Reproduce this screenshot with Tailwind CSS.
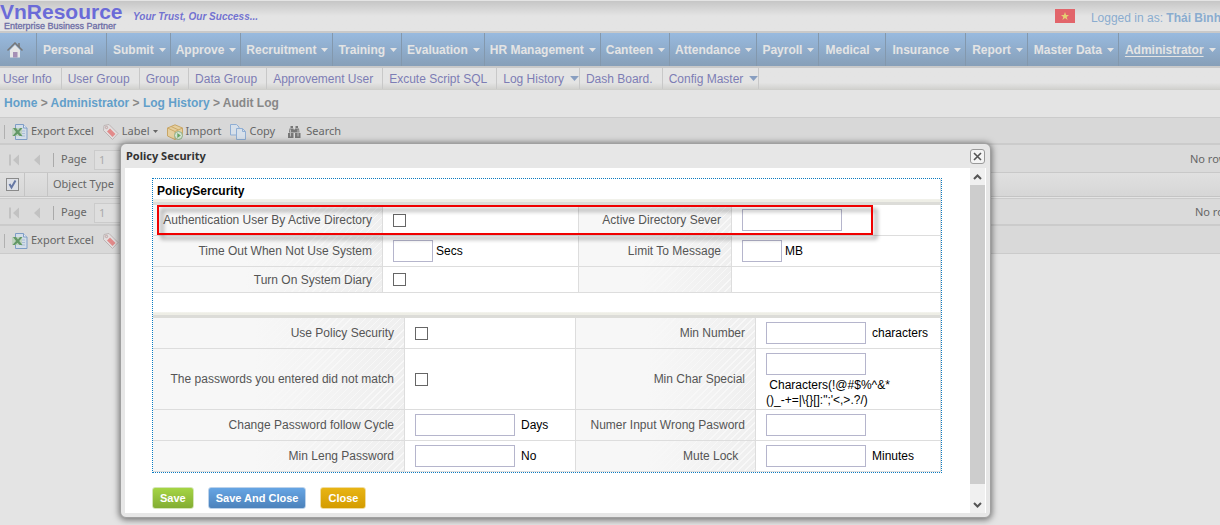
<!DOCTYPE html>
<html lang="en">
<head>
<meta charset="utf-8">
<title>Audit Log - VnResource</title>
<script src="https://cdn.jsdelivr.net/npm/@tailwindcss/browser@4"></script>
</head>
<body class="relative min-h-screen overflow-hidden bg-[#e4e4e4] font-['Liberation_Sans',sans-serif] text-xs">
<svg class="hidden">
  <symbol id="down" viewBox="0 0 7 4"><path d="M0 0h7L3.500 4z" fill="currentColor"/></symbol>
  <symbol id="excel" viewBox="0 0 16 16"><path d="M3.500 .5h8l3.500 3.500v11.500h-11.500z" fill="#d3dde8" stroke="#7e9dc6"/><path d="M11.500 .5V4H15" fill="#e4eaf2" stroke="#7e9dc6"/><path d="M9 7h4M9 9.500h4M9 12h4" stroke="#a9bdd6"/><path d="M0 4h10v8H0z" fill="#bfd2bf"/><path d="M1 4h3l2 2.500L8 4h2.500L7.200 8l3.300 4H7.700L5.500 9.700 3 12H.5L4 8z" fill="#629866"/></symbol>
  <symbol id="tag" viewBox="0 0 16 16"><path d="M1 1.500L6 .5l9 9-5.500 6-9-9z" fill="#e2dfdf" stroke="#bcb4b4"/><path d="M7 4.500l5.500 5.500-3 3L4 7.500z" fill="#e28a8a"/><circle cx="3.500" cy="3.500" r="1.200" fill="#d8d8d8" stroke="#b99" stroke-width=".8"/></symbol>
</svg>

<header class="flex h-[31px] items-start border-t border-[#e4e4e4] bg-linear-to-b from-[#c6c6c6] to-[#e4e4e4] to-50%">
  <div class="w-[122px] shrink-0 whitespace-nowrap pt-[2px]">
    <div class="text-[21px] font-bold leading-[18px] text-[#6b6bd8]">VnResource</div>
    <div class="pl-1 text-[9px] leading-[10px] text-[#6d6da6] [-webkit-text-stroke:0.300px_#6d6da6]">Enterprise Business Partner</div>
  </div>
  <div class="whitespace-nowrap pl-[11px] pt-2 text-[10px] font-bold italic leading-4 text-[#7272d0]">Your Trust, Our Success...</div>
  <div class="-mr-px ml-auto flex gap-4 whitespace-nowrap pt-2 text-[#8aaccf]">
    <svg class="h-[14px] w-5" viewBox="0 0 20 14"><path d="M0 0h20v14H0z" fill="#e2656b"/><path d="M10 3l1.100 3H14l-2.300 1.900.9 3L10 9.100 7.400 10.900l.9-3L6 6h2.900z" fill="#e5cf72"/></svg>
    <span class="leading-[18px]">Logged in as: <b>Thái Bình</b></span>
  </div>
</header>

<nav class="flex h-[37px] items-stretch overflow-hidden whitespace-nowrap border-y-2 border-[#c9c9c9] bg-linear-to-b from-[#98badf] to-[#879fb8] font-bold text-[#e4e4e4]">
  <a href="#" aria-label="Home" class="flex w-[37px] shrink-0 items-center border-r border-[#8398ad] pl-[7px]"><svg class="h-4 w-4" viewBox="0 0 16 16"><path d="M3 8v7.500h10V8L8 3z" fill="#e6e6e6"/><path d="M12 1v4" stroke="#777" stroke-width="1.500"/><path d="M.5 8.500L8 1l7.500 7.500" fill="none" stroke="#777" stroke-width="1.500"/><path d="M6 10h4.500v5.500H6z" fill="#a58fb5"/></svg></a>
  <a href="#" class="flex w-[70px] shrink-0 items-center border-r border-[#8398ad] pl-[6px]">Personal</a>
  <a href="#" class="flex shrink-0 items-center gap-[5px] border-r border-[#8398ad] pl-[6px] pr-1">Submit<svg class="h-1 w-[7px]"><use href="#down"/></svg></a>
  <a href="#" class="flex shrink-0 items-center gap-[5px] border-r border-[#8398ad] pl-[5px] pr-1">Approve<svg class="h-1 w-[7px]"><use href="#down"/></svg></a>
  <a href="#" class="flex shrink-0 items-center gap-[5px] border-r border-[#8398ad] pl-[5px] pr-1">Recruitment<svg class="h-1 w-[7px]"><use href="#down"/></svg></a>
  <a href="#" class="flex shrink-0 items-center gap-[5px] border-r border-[#8398ad] pl-[5px] pr-1">Training<svg class="h-1 w-[7px]"><use href="#down"/></svg></a>
  <a href="#" class="flex shrink-0 items-center gap-[5px] border-r border-[#8398ad] pl-[5px] pr-1">Evaluation<svg class="h-1 w-[7px]"><use href="#down"/></svg></a>
  <a href="#" class="flex shrink-0 items-center gap-[5px] border-r border-[#8398ad] pl-[5px] pr-1">HR Management<svg class="h-1 w-[7px]"><use href="#down"/></svg></a>
  <a href="#" class="flex shrink-0 items-center gap-[5px] border-r border-[#8398ad] pl-[5px] pr-1">Canteen<svg class="h-1 w-[7px]"><use href="#down"/></svg></a>
  <a href="#" class="flex shrink-0 items-center gap-[5px] border-r border-[#8398ad] pl-[5px] pr-1">Attendance<svg class="h-1 w-[7px]"><use href="#down"/></svg></a>
  <a href="#" class="flex shrink-0 items-center gap-[5px] border-r border-[#8398ad] pl-[5px] pr-1">Payroll<svg class="h-1 w-[7px]"><use href="#down"/></svg></a>
  <a href="#" class="flex shrink-0 items-center gap-[5px] border-r border-[#8398ad] pl-[6px] pr-1">Medical<svg class="h-1 w-[7px]"><use href="#down"/></svg></a>
  <a href="#" class="flex shrink-0 items-center gap-[5px] border-r border-[#8398ad] pl-[6px] pr-1">Insurance<svg class="h-1 w-[7px]"><use href="#down"/></svg></a>
  <a href="#" class="flex shrink-0 items-center gap-[5px] border-r border-[#8398ad] pl-[6px] pr-1">Report<svg class="h-1 w-[7px]"><use href="#down"/></svg></a>
  <a href="#" class="flex shrink-0 items-center gap-[5px] border-r border-[#8398ad] pl-[6px] pr-1">Master Data<svg class="h-1 w-[7px]"><use href="#down"/></svg></a>
  <a href="#" class="flex shrink-0 items-center gap-[5px] border-r border-[#8398ad] pl-[6px] pr-1"><span class="underline underline-offset-2">Administrator</span><svg class="h-1 w-[7px]"><use href="#down"/></svg></a>
</nav>

<nav class="flex h-[22px] items-stretch whitespace-nowrap border-b border-[#cfcfcc] bg-linear-to-b from-[#e4e4e4] from-70% to-[#d2d2cf] text-[#7d7db4]">
  <a href="#" class="flex items-center border-r border-[#c8c8c8] pl-[3px] pr-[9px]">User Info</a>
  <a href="#" class="flex items-center border-r border-[#c8c8c8] pl-[6px] pr-[9px]">User Group</a>
  <a href="#" class="flex items-center border-r border-[#c8c8c8] pl-[6px] pr-[9px]">Group</a>
  <a href="#" class="flex items-center border-r border-[#c8c8c8] pl-[6px] pr-[9px]">Data Group</a>
  <a href="#" class="flex items-center border-r border-[#c8c8c8] pl-[6px] pr-[9px]">Approvement User</a>
  <a href="#" class="flex items-center border-r border-[#c8c8c8] pl-[6px] pr-[9px]">Excute Script SQL</a>
  <a href="#" class="flex items-center gap-[6px] border-r border-[#c8c8c8] pl-[6px]">Log History<svg class="h-[5px] w-[9px] text-[#889ec0]"><use href="#down"/></svg></a>
  <a href="#" class="flex items-center border-r border-[#c8c8c8] pl-[6px] pr-[9px]">Dash Board.</a>
  <a href="#" class="flex items-center gap-[6px] border-r border-[#c8c8c8] pl-[6px]">Config Master<svg class="h-[5px] w-[9px] text-[#889ec0]"><use href="#down"/></svg></a>
</nav>

<main>
  <div class="h-[27px] pl-1 font-bold leading-[27px] text-[#888]"><a href="#" class="text-[#629fca]">Home</a> &gt; <a href="#" class="text-[#629fca]">Administrator</a> &gt; <a href="#" class="text-[#629fca]">Log History</a> &gt; Audit Log</div>

  <div class="flex h-7 items-center whitespace-nowrap border-b-2 border-t border-[#cbcbcb] bg-[#d8d8d8] pl-1 pt-[2px] font-['Noto_Sans',sans-serif] text-[11px] text-[#666]">
    <span class="mr-[7px] h-[14px] w-px bg-[#b0b0b0]"></span>
    <button class="mr-[9px] flex items-center gap-[3px]"><svg class="h-4 w-4"><use href="#excel"/></svg>Export Excel</button>
    <button class="mr-[9px] flex items-center gap-[3px]"><svg class="h-4 w-4"><use href="#tag"/></svg>Label<svg class="h-[3px] w-[5px]"><use href="#down"/></svg></button>
    <button class="mr-[9px] flex items-center gap-[3px]"><svg class="h-4 w-4" viewBox="0 0 16 16"><path d="M.5 4L8 .8 15.500 4v8L8 15.500.5 12z" fill="#e5cf9f" stroke="#c8a666"/><path d="M.5 4L8 7.500 15.500 4M8 7.500v8M4 2.500l7.500 3.400" fill="none" stroke="#cba968"/><circle cx="11.500" cy="11.500" r="4" fill="#d6e3d2" stroke="#8fb08a"/><path d="M10.300 9v5l3.500-2.500z" fill="#69a562"/></svg>Import</button>
    <button class="mr-3 flex items-center gap-[3px]"><svg class="h-4 w-4" viewBox="0 0 16 16" fill="#d7e0ea" stroke="#8faed4"><path d="M.5.5h6l2.500 2.500v8H.5z"/><path d="M6.500 4.500h6L15.500 7.500v8h-9z"/><path d="M12.500 4.500v3h3" fill="none"/></svg>Copy</button>
    <button class="flex items-center gap-[3px]"><svg class="h-4 w-4" viewBox="0 0 16 16" fill="#777"><path d="M3.500 2h2.500v2H3.500zM8.500 2H11v2H8.500zM2.500 4.500h4v4H2zM8 4.500h4l.5 4H8zM6 5.500h2.500v3H6zM1 9h5.500v5H1zM8 9h5.500v5H8z"/><path d="M3.500 5.500v7M11 5.500v7" stroke="#bbb"/></svg>Search</button>
  </div>

  <div class="flex h-7 items-center whitespace-nowrap border-b border-[#c8c8c8] bg-[#dadada] pl-2 pt-[2px] font-['Noto_Sans',sans-serif] text-[11px] text-[#666]">
    <button aria-label="First page"><svg class="h-3 w-[11px]" viewBox="0 0 11 12"><path d="M1 .5h2v11H1zM11 .5v11L5 6z" fill="#c2c2c2"/></svg></button>
    <button aria-label="Previous page" class="ml-[15px]"><svg class="h-3 w-[6px]" viewBox="0 0 6 12"><path d="M6 .5v11L0 6z" fill="#c2c2c2"/></svg></button>
    <span class="ml-[13px] h-[14px] w-px bg-[#aaa]"></span>
    <label for="page1" class="ml-[7px] w-[33px]">Page</label>
    <input id="page1" value="1" class="h-5 w-[30px] border border-[#cbcbcb] bg-[#dedede] px-1 text-[#aaa]">
    <span class="ml-auto w-[30px] overflow-hidden">No rows</span>
  </div>

  <table class="w-full table-fixed border-separate border-spacing-0 font-['Noto_Sans',sans-serif] text-[11px] text-[#666]">
    <thead><tr class="h-6 bg-linear-to-b from-[#e0e0e0] to-[#d6d6d6]">
      <th class="w-[25px] border-b border-r border-[#c4c4c4] p-0 pl-[6px]"><div class="relative h-[13px] w-[13px]"><input type="checkbox" checked aria-label="Select all rows" class="block h-[13px] w-[13px] appearance-none border border-[#8a8a8a] bg-[#dde0e6]"><svg class="pointer-events-none absolute left-0 top-0 h-[13px] w-[13px]" viewBox="0 0 13 13"><path d="M3.500 6l2 3.500 4-7" fill="none" stroke="#6577a4" stroke-width="2"/></svg></div></th>
      <th class="w-[23px] border-b border-r border-[#c4c4c4] p-0"></th>
      <th class="border-b border-[#c4c4c4] p-0 pl-[5px] text-left font-normal">Object Type</th>
    </tr></thead>
  </table>

  <div class="mt-px flex h-7 items-center whitespace-nowrap border-b-2 border-t border-[#cbcbcb] bg-[#dadada] pl-2 pt-[2px] font-['Noto_Sans',sans-serif] text-[11px] text-[#666]">
    <button aria-label="First page"><svg class="h-3 w-[11px]" viewBox="0 0 11 12"><path d="M1 .5h2v11H1zM11 .5v11L5 6z" fill="#c2c2c2"/></svg></button>
    <button aria-label="Previous page" class="ml-[15px]"><svg class="h-3 w-[6px]" viewBox="0 0 6 12"><path d="M6 .5v11L0 6z" fill="#c2c2c2"/></svg></button>
    <span class="ml-[13px] h-[14px] w-px bg-[#aaa]"></span>
    <label for="page2" class="ml-[7px] w-[33px]">Page</label>
    <input id="page2" value="1" class="h-5 w-[30px] border border-[#cbcbcb] bg-[#dedede] px-1 text-[#aaa]">
    <span class="ml-auto w-[25px] overflow-hidden">No rows</span>
  </div>
  <div class="flex h-7 items-center whitespace-nowrap border-b border-[#cbcbcb] bg-[#d9d9d9] pl-1 pt-[2px] font-['Noto_Sans',sans-serif] text-[11px] text-[#666]">
    <span class="mr-[7px] h-[14px] w-px bg-[#b0b0b0]"></span>
    <button class="mr-[9px] flex items-center gap-[3px]"><svg class="h-4 w-4"><use href="#excel"/></svg>Export Excel</button>
    <button aria-label="Label"><svg class="h-4 w-4"><use href="#tag"/></svg></button>
  </div>
</main>

<section role="dialog" aria-labelledby="dlg" class="absolute left-[120px] right-[229px] top-[143px] rounded-md border border-[#a0a0a0] bg-[#e7e7e7] px-1 pb-1 shadow-[0_1px_6px_1px_rgba(0,0,0,0.5)]">
  <div class="flex h-6 items-center justify-between pl-px pr-px">
    <h2 id="dlg" class="font-['Noto_Sans',sans-serif] text-[11px] font-bold text-[#333]">Policy Security</h2>
    <button aria-label="Close dialog" class="flex h-[15px] w-[15px] items-center justify-center rounded-[3px] border border-[#999] bg-[#f4f4f4]"><svg class="h-[9px] w-[9px]" viewBox="0 0 9 9"><path d="M1 1l7 7M8 1L1 8" stroke="#555" stroke-width="1.600"/></svg></button>
  </div>
  <div class="flex bg-white">
    <div class="min-w-0 flex-1 pb-1 pl-[27px] pr-7 pt-[10px]">
      <div class="relative border border-dotted border-[#0b7bc0]">
        <div class="border-r border-[#ddd]">
          <h3 class="h-[26px] border-b-[3px] border-[#dcdcd8] bg-linear-to-b from-white from-85% to-[#eeeee6] to-90% pl-1 font-bold leading-[25px] text-black">PolicySercurity</h3>
          <table class="w-full table-fixed border-separate border-spacing-0 text-black [&_td]:border-b [&_td]:border-[#ddd] [&_td]:px-[10px] [&_td]:py-1 [&_th]:border-b [&_th]:border-r [&_th]:border-[#ddd] [&_th]:bg-[linear-gradient(to_right,#f7f7f7_40%,transparent),repeating-linear-gradient(135deg,#f8f8f8_0_1px,#efefef_1px_5px)] [&_th]:px-[10px] [&_th]:py-0 [&_th]:text-right [&_th]:font-normal [&_th]:text-[#555]">
            <colgroup><col class="w-[230px]"><col class="w-[196px]"><col class="w-[153px]"><col></colgroup>
            <tr class="h-[31px]">
              <th><label for="ad">Authentication User By Active Directory</label></th>
              <td class="border-r"><input id="ad" type="checkbox" class="block h-[13px] w-[13px] appearance-none border border-[#666] bg-white"></td>
              <th><label for="server">Active Directory Sever</label></th>
              <td><input id="server" class="block h-[22px] w-[100px] border border-[#b5b5cc]"></td>
            </tr>
            <tr class="h-[31px]">
              <th><label for="timeout">Time Out When Not Use System</label></th>
              <td class="border-r"><div class="flex items-center gap-[3px]"><input id="timeout" class="h-[22px] w-10 border border-[#b5b5cc]">Secs</div></td>
              <th><label for="limit">Limit To Message</label></th>
              <td><div class="flex items-center gap-[3px]"><input id="limit" class="h-[22px] w-10 border border-[#b5b5cc]">MB</div></td>
            </tr>
            <tr class="h-[26px] [&>*]:border-b-2">
              <th><label for="diary">Turn On System Diary</label></th>
              <td class="border-r"><input id="diary" type="checkbox" class="block h-[13px] w-[13px] appearance-none border border-[#666] bg-white"></td>
              <th></th>
              <td></td>
            </tr>
          </table>
          <div class="h-[25px] border-b-[3px] border-[#dcdcd8] bg-linear-to-b from-white from-85% to-[#eeeee6] to-90%"></div>
          <table class="w-full table-fixed border-separate border-spacing-0 text-black [&_td]:border-b [&_td]:border-[#ddd] [&_td]:px-[10px] [&_td]:py-1 [&_th]:border-b [&_th]:border-r [&_th]:border-[#ddd] [&_th]:bg-[linear-gradient(to_right,#f7f7f7_40%,transparent),repeating-linear-gradient(135deg,#f8f8f8_0_1px,#efefef_1px_5px)] [&_th]:px-[10px] [&_th]:py-0 [&_th]:text-right [&_th]:font-normal [&_th]:text-[#555]">
            <colgroup><col class="w-[252px]"><col class="w-[171px]"><col class="w-[180px]"><col></colgroup>
            <tr class="h-[31px]">
              <th><label for="policy">Use Policy Security</label></th>
              <td class="border-r"><input id="policy" type="checkbox" class="block h-[13px] w-[13px] appearance-none border border-[#666] bg-white"></td>
              <th><label for="minnum">Min Number</label></th>
              <td><div class="flex items-center gap-[6px]"><input id="minnum" class="h-[22px] w-[100px] border border-[#b5b5cc]">characters</div></td>
            </tr>
            <tr class="h-[61px]">
              <th><label for="match">The passwords you entered did not match</label></th>
              <td class="border-r"><input id="match" type="checkbox" class="block h-[13px] w-[13px] appearance-none border border-[#666] bg-white"></td>
              <th><label for="special">Min Char Special</label></th>
              <td><input id="special" class="block h-[22px] w-[100px] border border-[#b5b5cc]"><div class="-mb-[3px] mt-[3px] whitespace-nowrap leading-[15px]">&nbsp;Characters(!@#$%^&amp;*<br>()_-+=|\{}[]:";'&lt;,&gt;.?/)</div></td>
            </tr>
            <tr class="h-[31px]">
              <th><label for="cycle">Change Password follow Cycle</label></th>
              <td class="border-r"><div class="flex items-center gap-[6px]"><input id="cycle" class="h-[22px] w-[100px] border border-[#b5b5cc]">Days</div></td>
              <th><label for="wrong">Numer Input Wrong Pasword</label></th>
              <td><input id="wrong" class="block h-[22px] w-[100px] border border-[#b5b5cc]"></td>
            </tr>
            <tr class="h-[31px]">
              <th><label for="minlen">Min Leng Password</label></th>
              <td class="border-r"><div class="flex items-center gap-[6px]"><input id="minlen" class="h-[22px] w-[100px] border border-[#b5b5cc]">No</div></td>
              <th><label for="mute">Mute Lock&nbsp;&nbsp;</label></th>
              <td><div class="flex items-center gap-[6px]"><input id="mute" class="h-[22px] w-[100px] border border-[#b5b5cc]">Minutes</div></td>
            </tr>
          </table>
        </div>
        <div class="pointer-events-none absolute left-1 right-[68px] top-[26px] h-[30px] border-2 border-[#f00000] drop-shadow-[4px_4px_2px_rgba(0,0,0,0.45)]"></div>
      </div>
      <div class="mt-[14px] flex h-[22px] items-stretch gap-[14px] whitespace-nowrap text-[11px] font-bold text-white">
        <button class="rounded-[3px] border border-[#d5e5b8] bg-linear-to-b from-[#a5d544] to-[#83ad33] px-[7px]">Save</button>
        <button class="rounded-[3px] border border-[#bcd2ea] bg-linear-to-b from-[#66a5e4] to-[#4c82bb] px-[7px]">Save And Close</button>
        <button class="rounded-[3px] border border-[#f0dca0] bg-linear-to-b from-[#e8b414] to-[#d49c00] px-[7px]">Close</button>
      </div>
    </div>
    <div class="flex w-[15px] shrink-0 flex-col items-center bg-[#f0f0f0]" aria-hidden="true">
      <svg class="h-[17px] w-[15px]" viewBox="0 0 15 17"><path d="M4 11l3.500-3.500L11 11" fill="none" stroke="#555" stroke-width="2"/></svg>
      <div class="w-full flex-1 bg-[#cdcdcd]"></div>
      <svg class="h-[29px] w-[15px]" viewBox="0 0 15 29"><path d="M4 19l3.500 3.500L11 19" fill="none" stroke="#555" stroke-width="2"/></svg>
    </div>
    <div class="w-px"></div>
  </div>
</section>
</body>
</html>
